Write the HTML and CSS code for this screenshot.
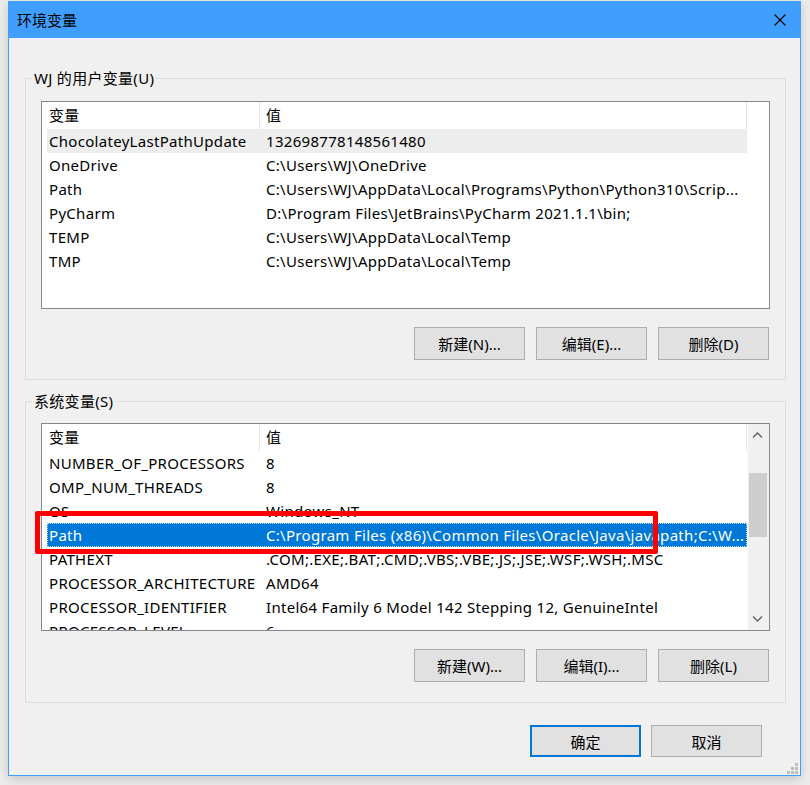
FILE: index.html
```html
<!DOCTYPE html>
<html lang="zh-CN">
<head>
<meta charset="utf-8">
<title>环境变量</title>
<link rel="stylesheet" href="styles.css">
</head>
<body>
<div class="window">
  <div class="titlebar">
    <span class="title">环境变量</span>
    <svg class="close" width="12" height="12" viewBox="0 0 12 12"><path d="M0.5 0.5 L11.5 11.5 M11.5 0.5 L0.5 11.5" stroke="#000" stroke-width="1.1" fill="none"/></svg>
  </div>
  <div class="client">
    <section class="group">
      <span class="group-label">WJ 的用户变量(U)</span>
      <div class="listbox">
        <div class="list-content">
          <div class="list-header"><div class="col col-name">变量</div><div class="col col-value">值</div></div>
          <div class="row row-hot"><div class="col col-name">ChocolateyLastPathUpdate</div><div class="col col-value">132698778148561480</div></div>
          <div class="row"><div class="col col-name">OneDrive</div><div class="col col-value">C:\Users\WJ\OneDrive</div></div>
          <div class="row"><div class="col col-name">Path</div><div class="col col-value">C:\Users\WJ\AppData\Local\Programs\Python\Python310\Scrip...</div></div>
          <div class="row"><div class="col col-name">PyCharm</div><div class="col col-value">D:\Program Files\JetBrains\PyCharm 2021.1.1\bin;</div></div>
          <div class="row"><div class="col col-name">TEMP</div><div class="col col-value">C:\Users\WJ\AppData\Local\Temp</div></div>
          <div class="row"><div class="col col-name">TMP</div><div class="col col-value">C:\Users\WJ\AppData\Local\Temp</div></div>
        </div>
      </div>
      <div class="btn-row">
        <button class="btn">新建(N)...</button>
        <button class="btn">编辑(E)...</button>
        <button class="btn">删除(D)</button>
      </div>
    </section>

    <section class="group group-system">
      <span class="group-label">系统变量(S)</span>
      <div class="listbox">
        <div class="list-content">
          <div class="list-header"><div class="col col-name">变量</div><div class="col col-value">值</div></div>
          <div class="row"><div class="col col-name">NUMBER_OF_PROCESSORS</div><div class="col col-value">8</div></div>
          <div class="row"><div class="col col-name">OMP_NUM_THREADS</div><div class="col col-value">8</div></div>
          <div class="row"><div class="col col-name">OS</div><div class="col col-value">Windows_NT</div></div>
          <div class="row row-selected"><div class="col col-name">Path</div><div class="col col-value">C:\Program Files (x86)\Common Files\Oracle\Java\javapath;C:\W...</div></div>
          <div class="row"><div class="col col-name">PATHEXT</div><div class="col col-value">.COM;.EXE;.BAT;.CMD;.VBS;.VBE;.JS;.JSE;.WSF;.WSH;.MSC</div></div>
          <div class="row"><div class="col col-name">PROCESSOR_ARCHITECTURE</div><div class="col col-value">AMD64</div></div>
          <div class="row"><div class="col col-name">PROCESSOR_IDENTIFIER</div><div class="col col-value">Intel64 Family 6 Model 142 Stepping 12, GenuineIntel</div></div>
          <div class="row"><div class="col col-name">PROCESSOR_LEVEL</div><div class="col col-value">6</div></div>
        </div>
        <div class="scrollbar">
          <div class="sb-arrow"><svg width="20" height="22" viewBox="0 0 20 22"><polyline points="5,13.5 9.5,9 14,13.5" fill="none" stroke="#606060" stroke-width="1.3"/></svg></div>
          <div class="sb-track"><div class="sb-thumb"></div></div>
          <div class="sb-arrow"><svg width="20" height="22" viewBox="0 0 20 22"><polyline points="5,8.5 9.5,13 14,8.5" fill="none" stroke="#606060" stroke-width="1.3"/></svg></div>
        </div>
      </div>
      <div class="btn-row">
        <button class="btn">新建(W)...</button>
        <button class="btn">编辑(I)...</button>
        <button class="btn">删除(L)</button>
      </div>
      <div class="annotation"></div>
    </section>

    <div class="dialog-buttons">
      <button class="btn btn-default">确定</button>
      <button class="btn">取消</button>
    </div>
    <svg class="grip" width="11" height="11" viewBox="0 0 11 11">
      <rect x="8" y="0" width="3" height="3" fill="#bcbcbc"/>
      <rect x="4" y="4" width="3" height="3" fill="#bcbcbc"/>
      <rect x="8" y="4" width="3" height="3" fill="#bcbcbc"/>
      <rect x="0" y="8" width="3" height="3" fill="#bcbcbc"/>
      <rect x="4" y="8" width="3" height="3" fill="#bcbcbc"/>
      <rect x="8" y="8" width="3" height="3" fill="#bcbcbc"/>
    </svg>
  </div>
</div>
</body>
</html>
```

FILE: styles.css
```css
* { box-sizing: border-box; }

html, body {
  margin: 0;
  padding: 0;
}

body {
  width: 810px;
  height: 785px;
  overflow: hidden;
  background: #ececec;
  font-family: "Noto Sans", "Noto Sans CJK SC", sans-serif;
  font-size: 15px;
  color: #000;
}

.window {
  margin: 1px 0 0 8px;
  width: 793px;
  box-shadow: 0 3px 10px rgba(0, 0, 0, 0.16);
}

.titlebar {
  height: 37px;
  background: #409eff;
  display: flex;
  align-items: center;
  justify-content: space-between;
  padding: 0 15px 0 9px;
}

.title {
  font-family: "Noto Sans CJK SC", sans-serif;
  font-size: 15px;
  line-height: 20px;
  padding-top: 1px;
}

.close {
  display: block;
}

.client {
  position: relative;
  background: #f0f0f0;
  border: 1px solid #409eff;
  border-top: none;
  padding: 40px 14px 18px 16px;
}

.group {
  position: relative;
  border: 1px solid #dcdcdc;
  padding: 22px 15px 19px 15px;
}

.group-system {
  margin-top: 21px;
  padding-top: 21px;
  padding-bottom: 20px;
}

.group-label {
  position: absolute;
  top: -11px;
  left: 6px;
  padding: 0 2px;
  background: #f0f0f0;
  line-height: 20px;
  letter-spacing: 0.3px;
  white-space: nowrap;
}

.listbox {
  height: 208px;
  border: 1px solid #828790;
  background: #fff;
  display: flex;
  overflow: hidden;
}

.list-content {
  flex: 1;
  min-width: 0;
  overflow: hidden;
}

.list-header,
.row {
  display: grid;
  grid-template-columns: 213px 487px;
  margin-left: 5px;
  width: 700px;
  white-space: nowrap;
  letter-spacing: 0.3px;
}

.list-header {
  height: 27px;
  line-height: 27px;
  border-right: 1px solid #e5e5e5;
}

.list-header .col-name {
  border-right: 1px solid #e5e5e5;
}

.row {
  height: 24px;
  line-height: 24px;
}

.col {
  overflow: hidden;
}

.col-name {
  padding-left: 2px;
}

.col-value {
  padding-left: 6px;
}

.row-hot {
  background: #ededed;
}

.row-selected {
  background: #0078d7;
  color: #fff;
  outline: 1px dotted #bcdcf6;
  outline-offset: -1px;
}

.scrollbar {
  width: 21px;
  flex: none;
  background: #f0f0f0;
  display: flex;
  flex-direction: column;
}

.sb-arrow {
  height: 22px;
  flex: none;
}

.sb-arrow svg {
  display: block;
}

.sb-track {
  flex: 1;
  padding-top: 27px;
}

.sb-thumb {
  height: 64px;
  margin: 0 2px 0 1px;
  background: #cdcdcd;
}

.btn-row {
  display: flex;
  justify-content: flex-end;
  gap: 11px;
  margin-top: 18px;
  padding-right: 1px;
}

.btn {
  width: 111px;
  height: 33px;
  background: #e1e1e1;
  border: 1px solid #adadad;
  font-family: "Noto Sans", "Noto Sans CJK SC", sans-serif;
  font-size: 15px;
  color: #000;
  padding: 0;
  margin: 0;
}

.dialog-buttons {
  display: flex;
  justify-content: flex-end;
  gap: 10px;
  margin-top: 22px;
  padding-right: 24px;
}

.dialog-buttons .btn {
  height: 32px;
}

.btn-default {
  border: 2px solid #0078d7;
}

.annotation {
  position: absolute;
  left: 9px;
  top: 109px;
  width: 623px;
  height: 43px;
  border: 5px solid #ff0000;
  border-radius: 2px;
}

.grip {
  position: absolute;
  right: 2px;
  bottom: 1px;
  display: block;
}
```
